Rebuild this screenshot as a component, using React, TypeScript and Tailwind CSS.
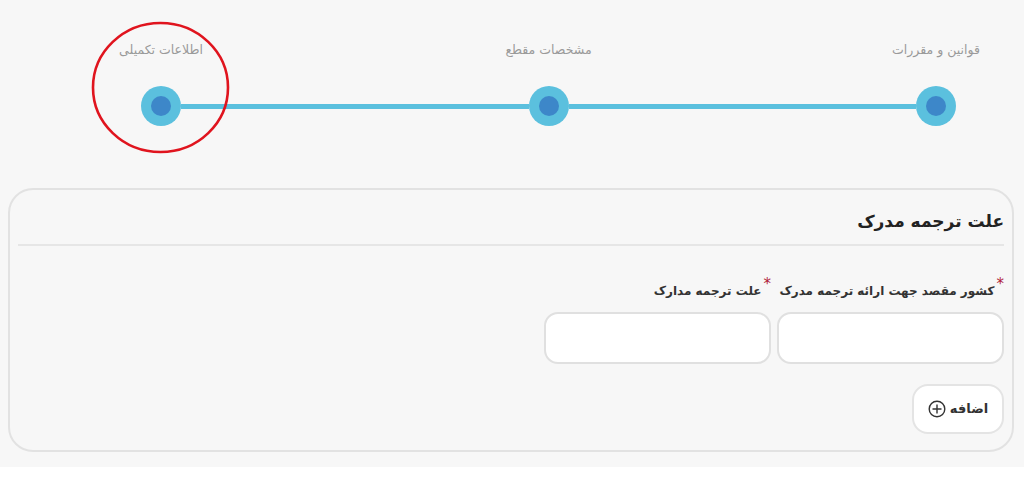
import React from 'react';

const steps = ['قوانین و مقررات', 'مشخصات مقطع', 'اطلاعات تکمیلی'];

const font = { fontFamily: '"DejaVu Sans", "Noto Sans", sans-serif' };

const StepDot: React.FC = () => (
  <div className="w-[40px] h-[40px] shrink-0 rounded-full bg-[#5bc0de] flex items-center justify-center">
    <div className="w-[20px] h-[20px] rounded-full bg-[#3d87c9]" />
  </div>
);

const Required: React.FC<{ label: string }> = ({ label }) => (
  <div className="flex items-start gap-[2px] h-[22px] whitespace-nowrap">
    <span className="text-[#b0223a] text-[15px] leading-[12px]">*</span>
    <span className="text-[12px] font-bold text-[#333] leading-[26px]">{label}</span>
  </div>
);

export default function App() {
  return (
    <div className="w-full h-[479px] bg-white" style={font}>
      <div className="relative h-[467px] bg-[#f7f7f7] pt-[41px]" dir="rtl">
        {/* step labels */}
        <div className="mr-[68px] w-[815px] flex justify-between">
          {steps.map((s) => (
            <div key={s} className="w-[40px] flex justify-center">
              <span className="whitespace-nowrap text-[12.5px] text-[#9a9a9a] leading-[18px]">{s}</span>
            </div>
          ))}
        </div>
        {/* step track */}
        <div className="mr-[68px] mt-[27px] w-[815px] flex items-center">
          <StepDot />
          <div className="flex-1 h-[5px] bg-[#5bc0de]" />
          <StepDot />
          <div className="flex-1 h-[5px] bg-[#5bc0de]" />
          <StepDot />
        </div>

        {/* annotation */}
        <svg className="absolute left-[91px] top-[21px]" width="139" height="133" viewBox="0 0 139 133">
          <ellipse cx="69.5" cy="66.5" rx="67.5" ry="64.5" fill="none" stroke="#e0141e" strokeWidth="2.6" />
        </svg>

        {/* card */}
        <div className="mx-[10px] mt-[62px] w-[1006px] h-[264px] border-2 border-[#e2e2e2] rounded-[25px] px-[8px]">
          <div className="h-[56px] flex items-center pt-[10px] border-b-2 border-[#e6e6e6]">
            <h2 className="text-[17px] font-bold text-[#222]">علت ترجمه مدرک</h2>
          </div>
          <div className="mt-[32px] flex gap-[6px]">
            <div className="w-[227px]">
              <Required label="کشور مقصد جهت ارائه ترجمه مدرک" />
            </div>
            <div className="w-[227px]">
              <Required label="علت ترجمه مدارک" />
            </div>
          </div>
          <div className="mt-[12px] flex gap-[6px]">
            <input className="w-[227px] h-[52px] bg-white border-2 border-[#e0e0e0] rounded-[14px] outline-none" />
            <input className="w-[227px] h-[52px] bg-white border-2 border-[#e0e0e0] rounded-[14px] outline-none" />
          </div>
          <button className="mt-[20px] w-[92px] h-[50px] bg-white border-2 border-[#e4e4e4] rounded-[16px] flex items-center justify-center gap-[4px]">
            <span className="text-[13px] font-bold text-[#333]">اضافه</span>
            <svg width="18" height="18" viewBox="0 0 18 18" fill="none" stroke="#333" strokeWidth="1.4">
              <circle cx="9" cy="9" r="7.8" />
              <path d="M9 4.5v9M4.5 9h9" />
            </svg>
          </button>
        </div>
      </div>
    </div>
  );
}
